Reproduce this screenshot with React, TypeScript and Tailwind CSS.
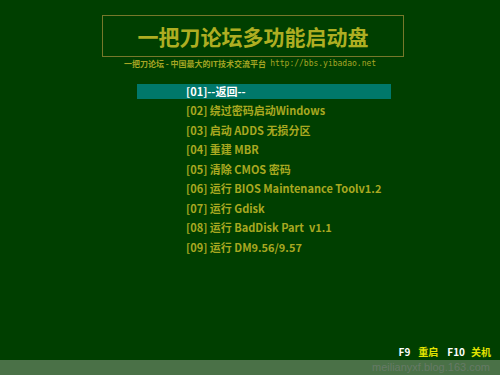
const items = [
  "[01]--返回--",
  "[02] 绕过密码启动Windows",
  "[03] 启动 ADDS 无损分区",
  "[04] 重建 MBR",
  "[05] 清除 CMOS 密码",
  "[06] 运行 BIOS Maintenance Toolv1.2",
  "[07] 运行 Gdisk",
  "[08] 运行 BadDisk Part  v1.1",
  "[09] 运行 DM9.56/9.57",
];

export default function App() {
  return (
    <div className="relative flex h-[375px] w-[500px] flex-col overflow-hidden bg-[#003f00] font-['Noto_Sans_CJK_SC',sans-serif]">
      <div className="ml-[102px] mt-[15px] flex h-[42px] w-[302px] items-center justify-center border border-[#76782a]">
        <span className="text-[21px] font-bold leading-none text-[#aeae22]">一把刀论坛多功能启动盘</span>
      </div>
      <div className="mt-[1px] flex h-[11px] items-center justify-center whitespace-nowrap text-[8px] font-bold leading-none text-[#a6a624]">
        一把刀论坛 - 中国最大的IT技术交流平台 <span className="ml-[4px] font-['DejaVu_Sans_Mono',monospace] text-[8px] font-normal">http://bbs.yibadao.net</span>
      </div>
      <div className="mt-[15px] flex flex-col">
        {items.map((t, i) => (
          <div
            key={t}
            className={
              i === 0
                ? "mb-[2px] ml-[137px] flex h-[15px] w-[254px] items-center whitespace-nowrap bg-[#00786a] pl-[49px] text-[11px] font-bold leading-none text-white"
                : "ml-[137px] flex h-[19.5px] w-[254px] items-center whitespace-pre pl-[49px] text-[11px] font-bold leading-none text-[#a8a820]"
            }
          >
            {t}
          </div>
        ))}
      </div>
      <div className="mt-auto flex justify-end pb-[3px] pr-[9px] text-[10px] font-bold leading-none">
        <span className="text-white">F9</span>
        <span className="ml-[8px] text-[#e4e400]">重启</span>
        <span className="ml-[9px] text-white">F10</span>
        <span className="ml-[6px] text-[#e4e400]">关机</span>
      </div>
      <div className="flex h-[15px] items-center justify-end bg-[#4a7147] pr-[10px] font-['Liberation_Sans',sans-serif] text-[11px] text-[#667a66]">
        meilianyxf.blog.163.com
      </div>
    </div>
  );
}
